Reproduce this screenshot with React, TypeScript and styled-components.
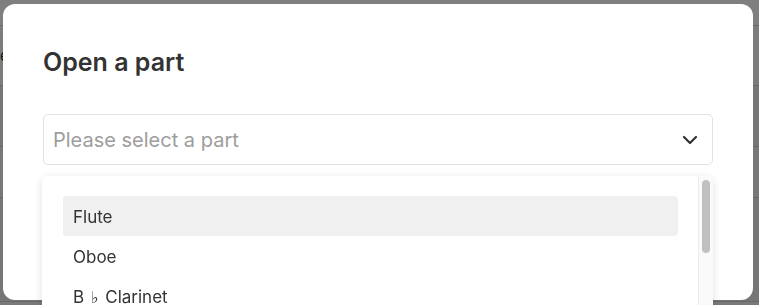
import React from "react";
import styled, { createGlobalStyle } from "styled-components";
import { ChevronDown } from "lucide-react";

const GlobalStyle = createGlobalStyle`
  html, body {
    margin: 0;
    padding: 0;
    background: #ffffff;
    font-family: Inter, "Noto Sans", sans-serif;
  }
`;

const Page = styled.div`
  width: 759px;
  height: 305px;
  overflow: hidden;
  background: #f4f4f4;
`;

const PageHeader = styled.div`
  height: 25px;
  background: #ffffff;
  border-bottom: 1px solid #d6d6d6;
`;

const PageRow = styled.div<{ $height: number; $tone: string }>`
  height: ${(p) => p.$height}px;
  background: ${(p) => p.$tone};
  border-bottom: 1px solid #d0d0d0;
  font-size: 15px;
  line-height: ${(p) => p.$height}px;
  color: #333;
`;

const Backdrop = styled.div`
  position: fixed;
  inset: 0;
  background: rgba(0, 0, 0, 0.5);
`;

const Modal = styled.div`
  position: fixed;
  top: 4px;
  left: 3px;
  width: 750px;
  height: 296px;
  box-sizing: border-box;
  padding: 43px 40px 0 40px;
  background: #ffffff;
  border-radius: 12px;
  display: flex;
  flex-direction: column;
`;

const Title = styled.h2`
  margin: 0;
  font-size: 25px;
  line-height: 30px;
  font-weight: 600;
  color: #333333;
`;

const Field = styled.div`
  position: relative;
  margin-top: 37px;
`;

const SelectBox = styled.div`
  height: 51px;
  box-sizing: border-box;
  border: 1px solid #e2e2e2;
  border-radius: 5px;
  display: flex;
  align-items: center;
  justify-content: space-between;
  padding: 0 10px 0 9px;
`;

const Placeholder = styled.span`
  font-size: 20px;
  color: #9d9d9d;
`;

const Menu = styled.div`
  position: absolute;
  top: 62px;
  left: -1px;
  right: 0;
  height: 200px;
  background: #ffffff;
  border-radius: 6px;
  box-shadow: 0 2px 10px rgba(0, 0, 0, 0.12);
  display: flex;
  overflow: hidden;
`;

const OptionList = styled.ul`
  flex: 1;
  list-style: none;
  margin: 0;
  padding: 20px 20px 0 21px;
`;

const Option = styled.li<{ $active?: boolean }>`
  height: 40px;
  box-sizing: border-box;
  padding: 2px 0 0 10px;
  display: flex;
  align-items: center;
  border-radius: 4px;
  font-size: 17px;
  color: #333333;
  white-space: pre;
  background: ${(p) => (p.$active ? "#f0f0f0" : "transparent")};
`;

const Flat = styled.span`
  font-family: "DejaVu Sans", sans-serif;
  font-size: 16px;
  padding: 0 2px;
`;

const ScrollTrack = styled.div`
  width: 14px;
  background: #fafafa;
  border-left: 1px solid #ebebeb;
  display: flex;
  justify-content: center;
  padding-top: 4px;
`;

const ScrollThumb = styled.div`
  width: 8px;
  height: 73px;
  border-radius: 4px;
  background: #c1c1c1;
`;

type Part = { prefix: string; flat?: boolean; rest?: string };

const parts: Part[] = [
  { prefix: "Flute" },
  { prefix: "Oboe" },
  { prefix: "B ", flat: true, rest: " Clarinet" },
  { prefix: "Bassoon" },
  { prefix: "Horn in F" },
  { prefix: "Trumpet in B ", flat: true },
];

export default function App() {
  return (
    <>
      <GlobalStyle />
      <Page>
        <PageHeader />
        <PageRow $height={59} $tone="#f8f8f8">
          e
        </PageRow>
        <PageRow $height={60} $tone="#ececec" />
        <PageRow $height={50} $tone="#f0f0f0" />
        <PageRow $height={103} $tone="#ececec" />
      </Page>
      <Backdrop />
      <Modal>
        <Title>Open a part</Title>
        <Field>
          <SelectBox>
            <Placeholder>Please select a part</Placeholder>
            <ChevronDown size={24} strokeWidth={2.2} color="#333" />
          </SelectBox>
          <Menu>
            <OptionList>
              {parts.map((part, i) => (
                <Option key={i} $active={i === 0}>
                  {part.prefix}
                  {part.flat && <Flat>{"\u266D"}</Flat>}
                  {part.rest}
                </Option>
              ))}
            </OptionList>
            <ScrollTrack>
              <ScrollThumb />
            </ScrollTrack>
          </Menu>
        </Field>
      </Modal>
    </>
  );
}
